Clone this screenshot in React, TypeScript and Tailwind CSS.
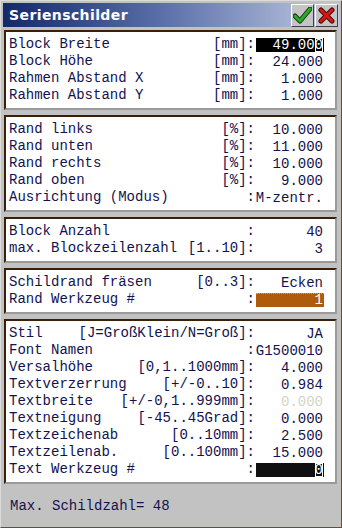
import React from 'react'

type Row = {
  label: string
  unit?: string
  value: string
  kind?: 'sel' | 'orange' | 'black' | 'dim'
}

const panels: Row[][] = [
  [
    { label: 'Block Breite', unit: '[mm]', value: '49.000', kind: 'sel' },
    { label: 'Block Höhe', unit: '[mm]', value: '24.000' },
    { label: 'Rahmen Abstand X', unit: '[mm]', value: '1.000' },
    { label: 'Rahmen Abstand Y', unit: '[mm]', value: '1.000' },
  ],
  [
    { label: 'Rand links', unit: '[%]', value: '10.000' },
    { label: 'Rand unten', unit: '[%]', value: '11.000' },
    { label: 'Rand rechts', unit: '[%]', value: '10.000' },
    { label: 'Rand oben', unit: '[%]', value: '9.000' },
    { label: 'Ausrichtung (Modus)', value: 'M-zentr.' },
  ],
  [
    { label: 'Block Anzahl', value: '40' },
    { label: 'max. Blockzeilenzahl', unit: '[1..10]', value: '3' },
  ],
  [
    { label: 'Schildrand fräsen', unit: '[0..3]', value: 'Ecken' },
    { label: 'Rand Werkzeug #', value: '1', kind: 'orange' },
  ],
  [
    { label: 'Stil', unit: '[J=GroßKlein/N=Groß]', value: 'JA' },
    { label: 'Font Namen', value: 'G1500010' },
    { label: 'Versalhöhe', unit: '[0,1..1000mm]', value: '4.000' },
    { label: 'Textverzerrung', unit: '[+/-0..10]', value: '0.984' },
    { label: 'Textbreite', unit: '[+/-0,1..999mm]', value: '0.000', kind: 'dim' },
    { label: 'Textneigung', unit: '[-45..45Grad]', value: '0.000' },
    { label: 'Textzeichenab', unit: '[0..10mm]', value: '2.500' },
    { label: 'Textzeilenab.', unit: '[0..100mm]', value: '15.000' },
    { label: 'Text Werkzeug #', value: '0', kind: 'black' },
  ],
]

function Value({ row }: { row: Row }) {
  const base = 'ml-[1px] w-[68px] h-[14px] flex items-center justify-end pr-[1px] leading-none'
  if (row.kind === 'sel')
    return (
      <span className={`${base} bg-black text-white`}>
        49.00<span className="outline outline-1 outline-white -outline-offset-1">0</span>
      </span>
    )
  if (row.kind === 'orange')
    return (
      <span className={`${base} bg-[#b05a0c] text-white border-t border-dotted border-[#e0a060]`}>
        {row.value}
      </span>
    )
  if (row.kind === 'black')
    return (
      <span className={`${base} bg-[#101010] text-white`}>
        <span className="outline outline-1 outline-white -outline-offset-1">{row.value}</span>
      </span>
    )
  return (
    <span className={`${base} ${row.kind === 'dim' ? 'text-[#d4d4c4]' : ''}`}>
      {row.value}
    </span>
  )
}

function Panel({ rows }: { rows: Row[] }) {
  return (
    <div className="bg-white border-t-2 border-l-2 border-t-[#3a2008] border-l-[#3a2008] border-r-2 border-b-2 border-r-[#9a9a9a] border-b-[#9a9a9a] pt-[4px] pb-[4px] pl-[3px] pr-[11px]">
      {rows.map((r) => (
        <div key={r.label} className="flex items-center h-[17px] whitespace-pre">
          <span className="flex-1">{r.label}</span>
          <span>{(r.unit ?? '') + ':'}</span>
          <Value row={r} />
        </div>
      ))}
    </div>
  )
}

export default function App() {
  return (
    <div className="w-[342px] h-[528px] bg-[#c2c2c2] border border-t-[#dcdcdc] border-l-[#dcdcdc] border-r-[#7a4a10] border-b-[#7a4a10] p-[2px] flex flex-col overflow-hidden">
      <div className="h-[24px] flex items-center bg-gradient-to-r from-[#14286a] via-[#5f74ac] to-[#c4cae2] pl-[6px] pr-[1px]">
        <span
          className="flex-1 text-white font-bold text-[14px] tracking-[0.4px]"
          style={{ fontFamily: '"DejaVu Sans", Verdana, sans-serif' }}
        >
          Serienschilder
        </span>
        <button className="w-[23px] h-[23px] bg-[#c4c4c4] border border-t-white border-l-white border-r-[#404040] border-b-[#404040] flex items-center justify-center">
          <svg width="19" height="17" viewBox="0 0 19 17">
            <path d="M2 9 L7 14 L17 2" fill="none" stroke="#1a3a10" strokeWidth="5" strokeLinecap="round" strokeLinejoin="round" />
            <path d="M2 9 L7 14 L17 2" fill="none" stroke="#2ea82a" strokeWidth="3" strokeLinecap="round" strokeLinejoin="round" />
          </svg>
        </button>
        <button className="ml-[1px] w-[23px] h-[23px] bg-[#c4c4c4] border border-t-white border-l-white border-r-[#404040] border-b-[#404040] flex items-center justify-center">
          <svg width="17" height="17" viewBox="0 0 17 17">
            <path d="M3 3 L14 14 M14 3 L3 14" fill="none" stroke="#4a0a0a" strokeWidth="5" strokeLinecap="round" />
            <path d="M3 3 L14 14 M14 3 L3 14" fill="none" stroke="#d01818" strokeWidth="3" strokeLinecap="round" />
          </svg>
        </button>
      </div>
      <div
        className="mt-[3px] ml-[1px] mr-[2px] flex flex-col gap-[5px] text-[14px] text-[#121250]"
        style={{ fontFamily: '"Liberation Mono", "Courier New", monospace' }}
      >
        {panels.map((rows, i) => (
          <Panel key={i} rows={rows} />
        ))}
        <div className="pl-[6px] pt-[9px] leading-[17px]">Max. Schildzahl= 48</div>
      </div>
    </div>
  )
}
